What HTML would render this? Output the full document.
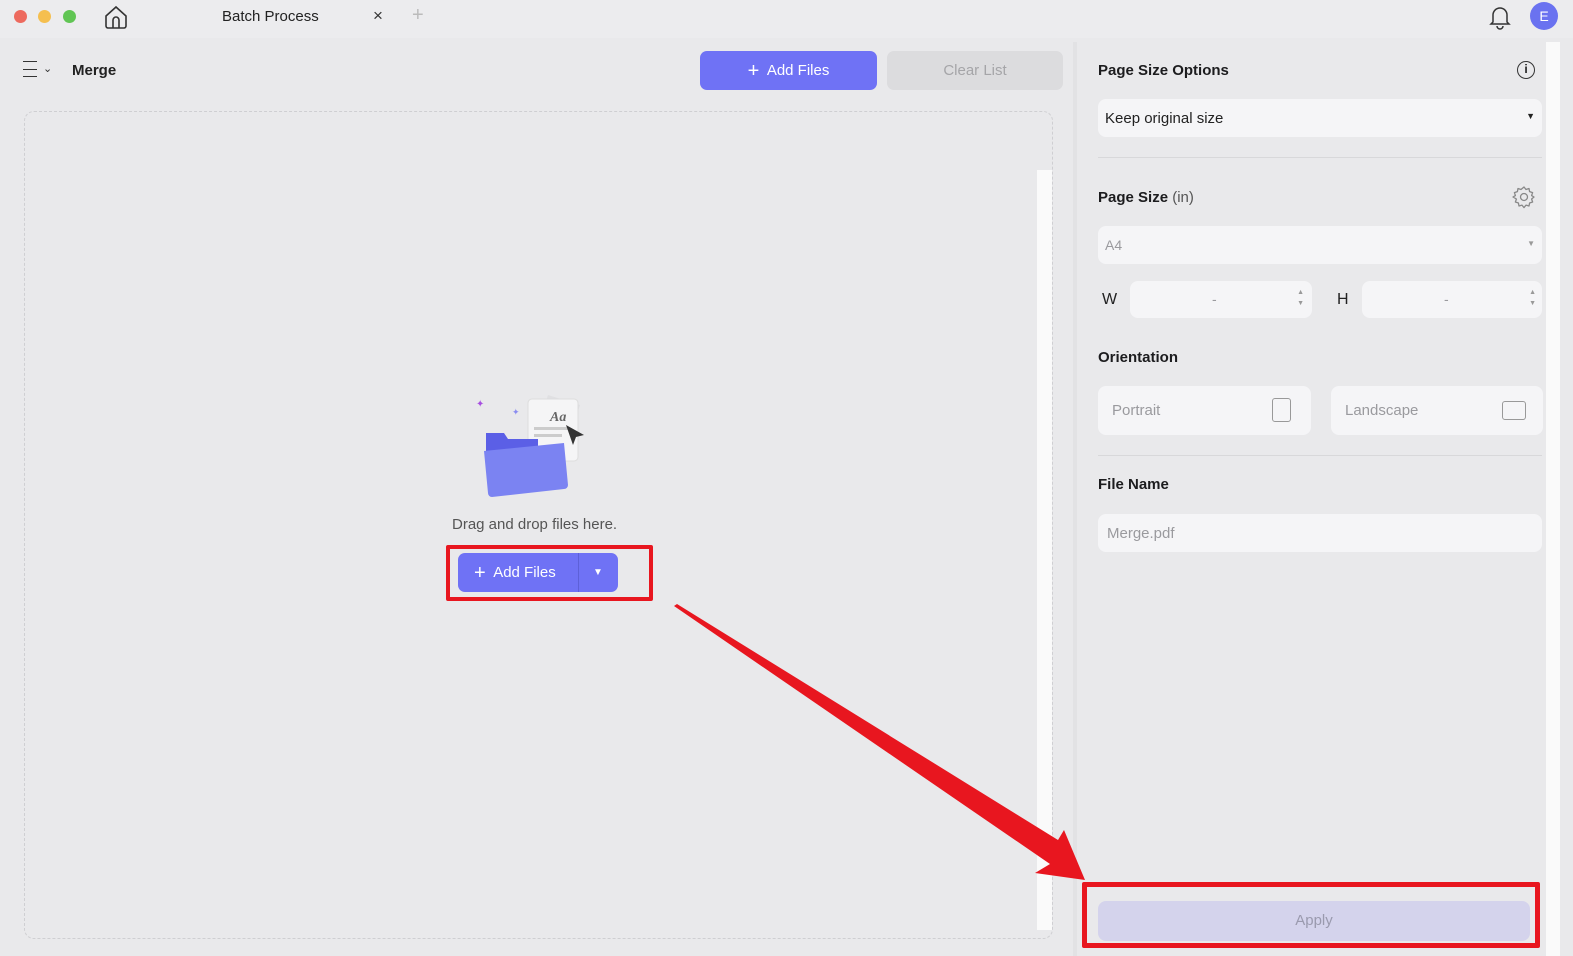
<!DOCTYPE html>
<html><head><style>
*{margin:0;padding:0;box-sizing:border-box}
body{width:1573px;height:956px;background:#e9e9eb;font-family:"Liberation Sans",sans-serif;position:relative;overflow:hidden;color:#222}
.a{position:absolute}
.inp{position:absolute;background:#f5f5f7;border-radius:8px}
.lbl{position:absolute;font-size:15px;font-weight:bold;color:#1c1c1e}
.gray{color:#9a9a9e;font-size:14px}
</style></head><body>
<div class="a" style="left:0;top:0;width:1573px;height:38px;background:#ececee"></div>
<div class="a" style="left:14px;top:10px;width:13px;height:13px;border-radius:50%;background:#ed6a5e"></div>
<div class="a" style="left:38px;top:10px;width:13px;height:13px;border-radius:50%;background:#f5bf4f"></div>
<div class="a" style="left:63px;top:10px;width:13px;height:13px;border-radius:50%;background:#61c554"></div>
<svg class="a" style="left:103px;top:4px" width="26" height="26" viewBox="0 0 26 26"><path d="M3 12 L13 3 L23 12 V22 a2 2 0 0 1-2 2 H5 a2 2 0 0 1-2-2Z M10 24 V16 a3 3 0 0 1 6 0 V24" fill="none" stroke="#333" stroke-width="1.6"/></svg>
<div class="a" style="left:222px;top:8px;font-size:15px;color:#222">Batch Process</div>
<div class="a" style="left:373px;top:6px;font-size:17px;color:#333">×</div>
<div class="a" style="left:412px;top:4px;font-size:20px;color:#bbb">+</div>
<svg class="a" style="left:1489px;top:4px" width="22" height="26" viewBox="0 0 22 26"><path d="M4 18 V11 a7 7 0 0 1 14 0 V18 L20 20 H2Z M8 22 a3 3 0 0 0 6 0" fill="none" stroke="#333" stroke-width="1.5"/></svg>
<div class="a" style="left:1530px;top:2px;width:28px;height:28px;border-radius:50%;background:#6a72f0;color:#fff;font-size:14px;text-align:center;line-height:28px">E</div>

<div class="a" style="left:23px;top:61px;width:14px;height:16px;border-top:1.5px solid #333;border-bottom:1.5px solid #333"></div>
<div class="a" style="left:23px;top:68.5px;width:14px;height:1.5px;background:#333"></div>
<div class="a" style="left:43px;top:62px;font-size:11px;color:#333">⌄</div>
<div class="a" style="left:72px;top:62px;font-size:15px;font-weight:bold">Merge</div>
<div class="a" style="left:700px;top:51px;width:177px;height:39px;border-radius:7px;background:#6f72f5;color:#fff;font-size:15px;text-align:center;line-height:39px"><span style="font-size:20px;vertical-align:-2px">+</span>&nbsp; Add Files</div>
<div class="a" style="left:887px;top:51px;width:176px;height:39px;border-radius:7px;background:#dcdcde;color:#a5a5a8;font-size:15px;text-align:center;line-height:39px">Clear List</div>

<div class="a" style="left:24px;top:111px;width:1029px;height:828px;border:1px dashed #cfcfd2;border-radius:10px"></div>
<div class="a" style="left:1037px;top:170px;width:15px;height:760px;background:#fafafa"></div>

<svg class="a" style="left:470px;top:385px" width="140" height="120" viewBox="0 0 140 120">
<path d="M78 10 l32 10 -18 58 -32-10z" fill="#e0e0e2"/>
<rect x="58" y="14" width="50" height="62" rx="4" fill="#f5f5f6" stroke="#ddd"/>
<text x="80" y="36" font-size="14" font-style="italic" font-weight="bold" fill="#666" font-family="Liberation Serif">Aa</text>
<rect x="64" y="42" width="34" height="3" fill="#ccc"/><rect x="64" y="49" width="28" height="3" fill="#ccc"/>
<path d="M96 40 l18 10 -8 2 -3 8z" fill="#333"/>
<path d="M16 48 h18 l4 6 h30 v30 h-52z" fill="#5b5fe6"/>
<path d="M14 66 l80-8 4 42 a4 4 0 0 1-4 4 l-72 8 a4 4 0 0 1-4-4z" fill="#7b83f2"/>
<text x="6" y="22" font-size="10" fill="#a74fe0">✦</text><text x="42" y="30" font-size="9" fill="#8a8cf0">✦</text>
</svg>
<div class="a" style="left:452px;top:516px;font-size:15px;color:#555">Drag and drop files here.</div>
<div class="a" style="left:458px;top:553px;width:160px;height:39px;border-radius:7px;background:#6f72f5;color:#fff;font-size:15px;line-height:39px"><span style="position:absolute;left:16px"><span style="font-size:20px;vertical-align:-2px">+</span>&nbsp; Add Files</span><span style="position:absolute;left:120px;top:0;width:1px;height:39px;background:#5d60d8"></span><span style="position:absolute;left:135px;font-size:10px">▼</span></div>
<div class="a" style="left:446px;top:545px;width:207px;height:56px;border:4px solid #e8161f;border-radius:2px"></div>

<div class="a" style="left:1073px;top:42px;width:4px;height:914px;background:#e2e2e4"></div>
<div class="a" style="left:1546px;top:42px;width:14px;height:914px;background:#fafafa"></div>
<div class="lbl" style="left:1098px;top:62px">Page Size Options</div>
<div class="a" style="left:1517px;top:61px;width:18px;height:18px;border:1.5px solid #333;border-radius:50%;font-size:12px;text-align:center;line-height:15px;font-weight:bold">i</div>
<div class="inp" style="left:1098px;top:99px;width:444px;height:38px"><span style="position:absolute;left:7px;top:11px;font-size:15px;color:#222">Keep original size</span><span style="position:absolute;right:7px;top:12px;font-size:9px">▼</span></div>
<div class="a" style="left:1098px;top:157px;width:444px;height:1px;background:#d8d8da"></div>
<div class="lbl" style="left:1098px;top:189px">Page Size <span style="font-weight:normal;color:#555">(in)</span></div>
<svg class="a" style="left:1512px;top:185px" width="24" height="24" viewBox="0 0 24 24"><path d="M12 2 l2 2.5 3-1 .6 3.1 3 1-1 3 2.4 1.4-2.4 2 1 3-3 1-.6 3-3-.9-2 2.5-2-2.5-3 .9-.6-3-3-1 1-3L1 12l2.4-1.4-1-3 3-1L6 3.5l3 1z" fill="none" stroke="#888" stroke-width="1.3" stroke-linejoin="round"/><circle cx="12" cy="12" r="3.5" fill="none" stroke="#888" stroke-width="1.3"/></svg>
<div class="inp" style="left:1098px;top:226px;width:444px;height:38px"><span class="gray" style="position:absolute;left:7px;top:11px">A4</span><span style="position:absolute;right:7px;top:13px;font-size:8px;color:#999">▼</span></div>
<div class="a" style="left:1102px;top:291px;font-size:16px">W</div>
<div class="inp" style="left:1130px;top:281px;width:182px;height:37px"><span class="gray" style="position:absolute;left:82px;top:10px">-</span><span style="position:absolute;right:8px;top:6px;font-size:7px;color:#999;line-height:11px">▲<br>▼</span></div>
<div class="a" style="left:1337px;top:291px;font-size:16px">H</div>
<div class="inp" style="left:1362px;top:281px;width:180px;height:37px"><span class="gray" style="position:absolute;left:82px;top:10px">-</span><span style="position:absolute;right:6px;top:6px;font-size:7px;color:#999;line-height:11px">▲<br>▼</span></div>
<div class="lbl" style="left:1098px;top:349px">Orientation</div>
<div class="inp" style="left:1098px;top:386px;width:213px;height:49px"><span class="gray" style="position:absolute;left:14px;top:16px;font-size:15px">Portrait</span><div style="position:absolute;left:174px;top:12px;width:19px;height:24px;border:1.5px solid #999;border-radius:3px"></div></div>
<div class="inp" style="left:1331px;top:386px;width:212px;height:49px"><span class="gray" style="position:absolute;left:14px;top:16px;font-size:15px">Landscape</span><div style="position:absolute;left:171px;top:15px;width:24px;height:19px;border:1.5px solid #999;border-radius:3px"></div></div>
<div class="a" style="left:1098px;top:455px;width:444px;height:1px;background:#d8d8da"></div>
<div class="lbl" style="left:1098px;top:476px">File Name</div>
<div class="inp" style="left:1098px;top:514px;width:444px;height:38px"><span class="gray" style="position:absolute;left:9px;top:11px;font-size:15px">Merge.pdf</span></div>

<div class="a" style="left:1098px;top:901px;width:432px;height:40px;border-radius:8px;background:#d4d3ec;color:#9a9aae;font-size:15px;text-align:center;line-height:40px">Apply</div>
<div class="a" style="left:1082px;top:882px;width:458px;height:66px;border:5px solid #e8161f;border-radius:2px"></div>

<svg class="a" style="left:0;top:0" width="1573" height="956"><path d="M674 606 L677 604 L1058 840 L1064 830 L1085 880 L1035 873 L1050 864 Z" fill="#e8161f"/></svg>
</body></html>
